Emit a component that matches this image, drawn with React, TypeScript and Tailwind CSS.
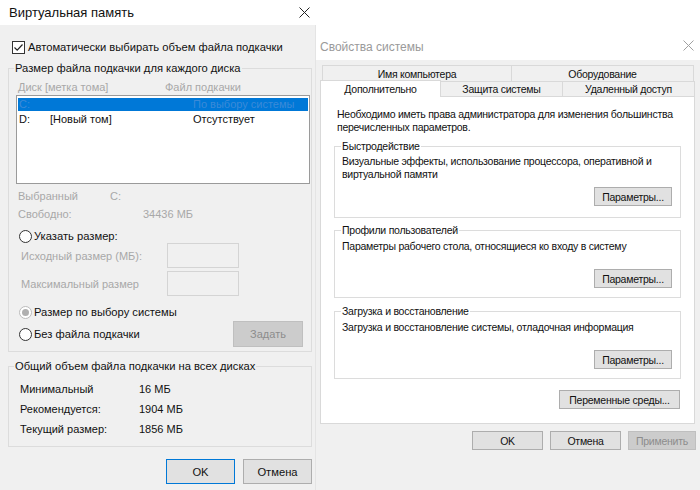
import React from "react"

const CloseIcon: React.FC<{ color: string }> = ({ color }) => (
  <svg width="11" height="11" viewBox="0 0 11 11">
    <path d="M0.5 0.5 L10.5 10.5 M10.5 0.5 L0.5 10.5" stroke={color} strokeWidth="1" />
  </svg>
)

const Radio: React.FC<{ checked?: boolean; disabled?: boolean }> = ({ checked, disabled }) => (
  <div
    className={`w-[13px] h-[13px] rounded-full border bg-white flex items-center justify-center shrink-0 ${
      disabled ? "border-[#bcbcbc]" : "border-[#333]"
    }`}
  >
    {checked && <div className="w-[7px] h-[7px] rounded-full bg-[#b0b0b0]" />}
  </div>
)

const WinButton: React.FC<{ label: string; w: string; h: string; primary?: boolean; disabled?: boolean }> = ({
  label,
  w,
  h,
  primary,
  disabled,
}) => (
  <div
    className={`${w} ${h} shrink-0 flex items-center justify-center border whitespace-nowrap ${
      disabled
        ? "bg-[#cccccc] border-[#bfbfbf] text-[#8c8c8c]"
        : primary
        ? "bg-[#e1e1e1] border-[#0078d7] text-[#111]"
        : "bg-[#e1e1e1] border-[#adadad] text-[#111]"
    }`}
  >
    {label}
  </div>
)

const VirtualMemory: React.FC = () => {
  return (
    <div className="w-[316px] h-[490px] shrink-0 flex flex-col font-['Liberation_Sans',sans-serif] text-[11px] leading-[16px] text-[#111] whitespace-nowrap">
      {/* Title bar */}
      <div className="h-[25px] bg-white flex items-center justify-between pl-[9px] pr-[6px] text-[13px]">
        <span>Виртуальная память</span>
        <CloseIcon color="#222" />
      </div>

      <div className="flex-1 bg-[#f0f0f0] px-[8px] border-r border-[#e4e4e4]">
        {/* Auto checkbox */}
        <div className="mt-[14px] ml-[4px] h-[16px] flex items-center gap-[3px] text-[11.2px]">
          <div className="w-[13px] h-[13px] border border-[#333] bg-white flex items-center justify-center">
            <svg width="11" height="11" viewBox="0 0 11 11">
              <path d="M1.5 5.5 L4.2 8.2 L9.5 2.5" stroke="#222" strokeWidth="1.2" fill="none" />
            </svg>
          </div>
          <span>Автоматически выбирать объем файла подкачки</span>
        </div>

        {/* Per-disk group */}
        <fieldset className="mt-[5px] w-[304px] min-w-0 border border-[#dcdcdc] p-0 pb-[4px]">
          <legend className="ml-[5px] px-[1px] text-[11.2px]">Размер файла подкачки для каждого диска</legend>
          <div className="pl-[7px] pr-[1px]">
            <div className="mt-[3px] h-[16px] flex text-[#a8a8a8]">
              <span className="ml-[2px] w-[147px]">Диск [метка тома]</span>
              <span>Файл подкачки</span>
            </div>
            <div className="h-[89px] w-[294px] border border-[#9a9a9a] bg-white pt-[2px] px-[1px]">
              <div className="h-[13px] bg-[#0078d7] flex items-center text-[#3b8ad8] leading-[13px]">
                <span className="w-[175px] pl-[1px]">C:</span>
                <span>По выбору системы</span>
              </div>
              <div className="h-[14px] flex items-center leading-[14px] mt-[1px]">
                <span className="w-[32px] pl-[1px]">D:</span>
                <span className="w-[143px]">[Новый том]</span>
                <span>Отсутствует</span>
              </div>
            </div>

            <div className="mt-[4px] h-[16px] flex text-[#a8a8a8]">
              <span className="ml-[2px] w-[92px]">Выбранный</span>
              <span>C:</span>
            </div>
            <div className="mt-[2px] h-[16px] flex text-[#a8a8a8]">
              <span className="ml-[2px] w-[125px]">Свободно:</span>
              <span>34436 МБ</span>
            </div>

            <div className="mt-[7px] h-[14px] flex items-center gap-[2px] ml-[3px] text-[11.2px]">
              <Radio />
              <span>Указать размер:</span>
            </div>
            <div className="h-[25px] flex items-center text-[#a8a8a8]">
              <span className="ml-[5px] w-[146px]">Исходный размер (МБ):</span>
              <div className="w-[72px] h-[25px] border border-[#d4d4d4] bg-[#f0f0f0]" />
            </div>
            <div className="mt-[3px] h-[25px] flex items-center text-[#a8a8a8]">
              <span className="ml-[5px] w-[146px]">Максимальный размер</span>
              <div className="w-[72px] h-[25px] border border-[#d4d4d4] bg-[#f0f0f0]" />
            </div>

            <div className="mt-[8px] h-[16px] flex items-center gap-[2px] ml-[3px] text-[11.2px]">
              <Radio checked disabled />
              <span>Размер по выбору системы</span>
            </div>
            <div className="mt-[1px] h-[26px] flex items-center justify-between pr-[7px]">
              <div className="flex items-center gap-[2px] ml-[3px] text-[11.2px]">
                <Radio />
                <span>Без файла подкачки</span>
              </div>
              <WinButton label="Задать" w="w-[70px]" h="h-[26px]" disabled />
            </div>
          </div>
        </fieldset>

        {/* Totals group */}
        <fieldset className="mt-[6px] w-[304px] min-w-0 border border-[#dcdcdc] p-0 pb-[7px]">
          <legend className="ml-[5px] px-[1px] text-[11.2px]">Общий объем файла подкачки на всех дисках</legend>
          <div className="mt-[5px] pl-[11px]">
            {[
              ["Минимальный", "16 МБ"],
              ["Рекомендуется:", "1904 МБ"],
              ["Текущий размер:", "1856 МБ"],
            ].map(([label, value]) => (
              <div key={label} className="h-[20px] flex items-center">
                <span className="w-[119px]">{label}</span>
                <span>{value}</span>
              </div>
            ))}
          </div>
        </fieldset>

        <div className="mt-[12px] flex gap-[8px] pl-[158px] text-[11.2px]">
          <WinButton label="OK" w="w-[69px]" h="h-[25px]" primary />
          <WinButton label="Отмена" w="w-[69px]" h="h-[25px]" />
        </div>
      </div>
    </div>
  )
}

const Group: React.FC<{ title: string; text: React.ReactNode; textMt: string; btnMt: string; pb: string; mt: string }> = ({
  title,
  text,
  textMt,
  btnMt,
  pb,
  mt,
}) => (
  <fieldset className={`${mt} ${pb} ml-[13px] w-[347px] min-w-0 border border-[#dcdcdc] p-0`}>
    <legend className="ml-[6px] px-[1px]">{title}</legend>
    <div className="pl-[7px] pr-[8px]">
      <div className={`${textMt} leading-[13px]`}>{text}</div>
      <div className={`${btnMt} flex justify-end`}>
        <WinButton label="Параметры..." w="w-[78px]" h="h-[19px]" />
      </div>
    </div>
  </fieldset>
)

const SystemProperties: React.FC = () => {
  return (
    <div className="flex-1 h-[490px] flex flex-col font-['Liberation_Sans',sans-serif] text-[10.5px] tracking-[-0.25px] leading-[14px] text-[#111] whitespace-nowrap">
      {/* Title bar */}
      <div className="h-[60px] bg-white flex items-end pb-[6px] pl-[4px] pr-[6px] justify-between">
        <span className="text-[12px] tracking-normal text-[#9a9a9a]">Свойства системы</span>
        <div className="mb-[3px]">
          <CloseIcon color="#a0a0a0" />
        </div>
      </div>

      <div className="flex-1 bg-[#f0f0f0] pl-[4px] pt-[5px]">
        {/* Tabs */}
        <div className="ml-[2px] w-[372px] h-[16px] flex">
          <div className="w-[190px] h-full border border-b-0 border-[#d9d9d9] flex items-center justify-center">
            Имя компьютера
          </div>
          <div className="w-[182px] h-full border border-b-0 border-l-0 border-[#d9d9d9] flex items-center justify-center">
            Оборудование
          </div>
        </div>
        <div className="w-[375px] h-[16px] flex">
          <div className="w-[121px] h-[17px] -mt-[1px] bg-white border border-b-0 border-[#d9d9d9] flex items-center justify-center relative z-10">
            Дополнительно
          </div>
          <div className="w-[122px] h-full border border-l-0 border-[#d9d9d9] flex items-center justify-center">
            Защита системы
          </div>
          <div className="w-[132px] h-full border border-l-0 border-[#d9d9d9] flex items-center justify-center">
            Удаленный доступ
          </div>
        </div>

        {/* Panel */}
        <div className="w-[375px] h-[328px] -mt-[1px] bg-white border border-[#d9d9d9] flex flex-col overflow-hidden">
          <div className="mt-[11px] pl-[16px] leading-[13px]">
            Необходимо иметь права администратора для изменения большинства
            <br />
            перечисленных параметров.
          </div>
          <Group
            mt="mt-[5px]"
            title="Быстродействие"
            textMt="mt-[2px]"
            text={
              <>
                Визуальные эффекты, использование процессора, оперативной и
                <br />
                виртуальной памяти
              </>
            }
            btnMt="mt-[6px]"
            pb="pb-[11px]"
          />
          <Group
            mt="mt-[5px]"
            title="Профили пользователей"
            textMt="mt-[3px]"
            text="Параметры рабочего стола, относящиеся ко входу в систему"
            btnMt="mt-[16px]"
            pb="pb-[9px]"
          />
          <Group
            mt="mt-[6px]"
            title="Загрузка и восстановление"
            textMt="mt-[3px]"
            text="Загрузка и восстановление системы, отладочная информация"
            btnMt="mt-[16px]"
            pb="pb-[9px]"
          />
          <div className="mt-[11px] pr-[14px] flex justify-end">
            <WinButton label="Переменные среды..." w="w-[121px]" h="h-[19px]" />
          </div>
        </div>

        {/* Dialog buttons */}
        <div className="mt-[7px] flex justify-end pr-[4px] gap-[7px]">
          <WinButton label="OK" w="w-[71px]" h="h-[19px]" />
          <WinButton label="Отмена" w="w-[71px]" h="h-[19px]" />
          <WinButton label="Применить" w="w-[68px]" h="h-[19px]" disabled />
        </div>
      </div>
    </div>
  )
}

export default function App() {
  return (
    <div className="w-[700px] h-[490px] flex overflow-hidden bg-white">
      <VirtualMemory />
      <SystemProperties />
    </div>
  )
}
